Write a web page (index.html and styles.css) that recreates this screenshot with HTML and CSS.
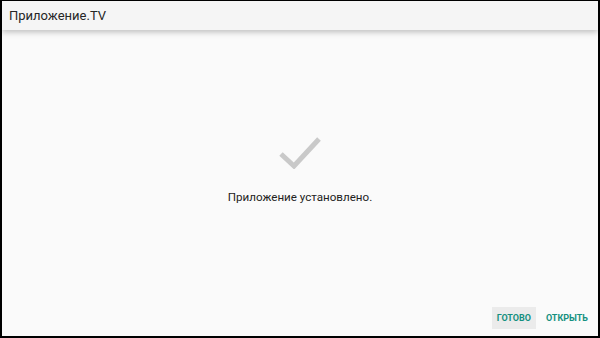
FILE: index.html
```html
<!DOCTYPE html>
<html lang="ru">
<head>
<meta charset="utf-8">
<link rel="stylesheet" href="styles.css">
</head>
<body>
<div class="frame">
  <header class="topbar">
    <span class="title">Приложение.TV</span>
  </header>
  <main class="content">
    <svg class="check" width="44" height="34" viewBox="0 0 44 34">
      <polyline points="3,19 16,31 41,4" fill="none" stroke="#c9c9c9" stroke-width="5"/>
    </svg>
    <p class="message">Приложение установлено.</p>
  </main>
  <footer class="actions">
    <button class="btn btn-focused">ГОТОВО</button>
    <button class="btn">ОТКРЫТЬ</button>
  </footer>
</div>
</body>
</html>
```
FILE: styles.css
```css
html, body {
  margin: 0;
  padding: 0;
  background: #000;
}
.frame {
  box-sizing: border-box;
  width: 600px;
  height: 338px;
  border-top: 1px solid #000;
  border-left: 2px solid #000;
  border-right: 2px solid #000;
  border-bottom: 2px solid #000;
  background: #fafafa;
  display: flex;
  flex-direction: column;
  font-family: Roboto, "Liberation Sans", sans-serif;
  overflow: hidden;
}
.topbar {
  height: 29px;
  background: #f5f5f5;
  display: flex;
  align-items: center;
  padding-left: 7px;
  box-shadow: 0 2px 6px rgba(0,0,0,0.25);
  position: relative;
  z-index: 1;
}
.title {
  font-size: 13px;
  color: #262626;
}
.content {
  flex: 1;
  display: flex;
  flex-direction: column;
  align-items: center;
  justify-content: center;
  padding-top: 2px;
}
.check {
  display: block;
}
.message {
  margin: 21px 0 0;
  font-size: 11.6px;
  color: #222;
}
.actions {
  display: flex;
  justify-content: flex-end;
  gap: 5px;
  padding: 0 5px 7px 0;
}
.btn {
  border: none;
  background: transparent;
  font-family: Roboto, "Liberation Sans", sans-serif;
  font-size: 9px;
  font-weight: 700;
  color: #15907f;
  height: 22px;
  padding: 0 5px;
}
.btn-focused {
  background: #ebebeb;
}
```
